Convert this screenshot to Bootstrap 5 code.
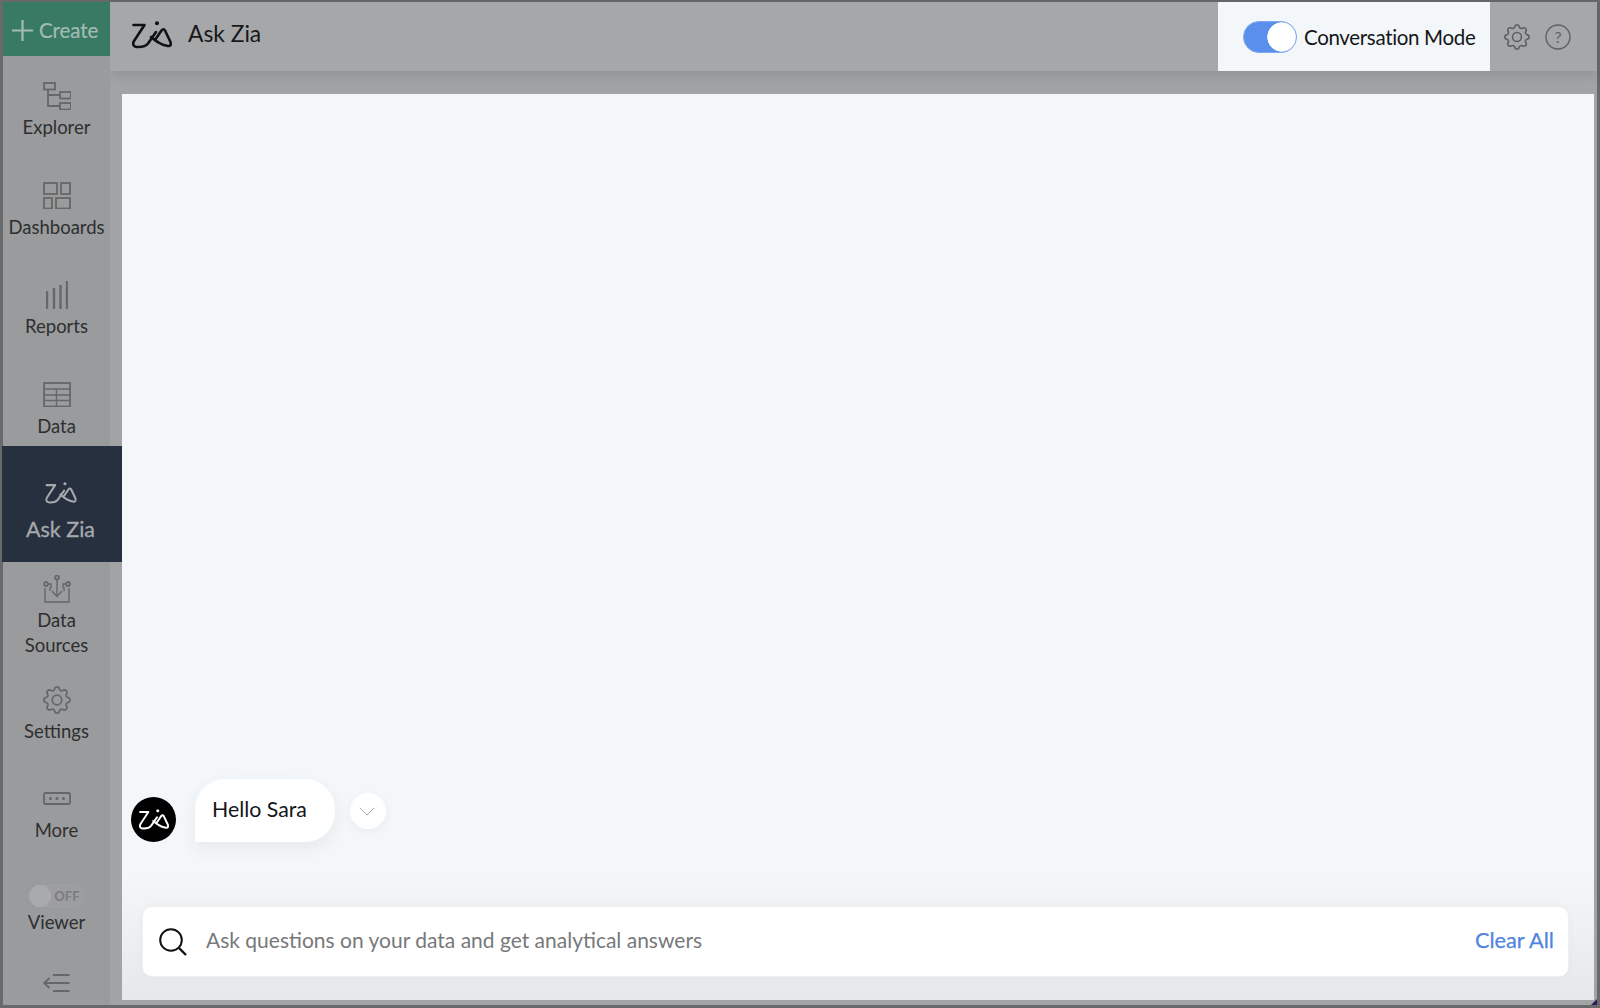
<!DOCTYPE html>
<html lang="en">
<head>
<meta charset="utf-8">
<title>Ask Zia</title>
<link href="https://cdn.jsdelivr.net/npm/bootstrap@5.3.0/dist/css/bootstrap.min.css" rel="stylesheet">
<style>
html,body{height:100%;margin:0;overflow:hidden}
body{font-family:Lato,"Liberation Sans",sans-serif;background:#6a6b6c}
.frame{width:1600px;height:1008px;padding:2px 3px 3px 3px;background:#68696a;position:relative}
.shell{height:1003px;background:#a2a3a5}
.rail{width:107px;flex:none;background:#9a9b9c;position:relative;z-index:2}
.rail-create{height:54px;width:107px;background:#397a65;color:#a3bcb3;border:0;border-radius:0;font-size:20.4px;padding:2px 0 0 9px;gap:6px;-webkit-text-stroke:.2px #a3bcb3}
.rail-create:hover{background:#397a65;color:#a3bcb3}
.rail-item{font-size:18.5px;line-height:24.5px;color:#2e2f30;text-align:center}
.rail-item svg{display:block;flex:none}
.rail-label{margin-top:5px}
.it-explorer{height:99px;padding-top:26px}
.it-dash{height:99px;padding-top:27px}
.it-dash .rail-label{margin-top:6px}
.it-reports{height:96px;padding-top:27px}
.it-data{height:96px;padding-top:32px}
.it-data .rail-label{margin-top:7px}
.it-active{height:116px;padding-top:36px;padding-right:3px;width:120px;margin-left:-1px;margin-right:-13px;background:#27303e;color:#a6a9ad;font-size:21.5px;-webkit-text-stroke:.3px #a6a9ad}
.it-active .rail-label{margin-top:13px}
.it-sources{height:106px;padding-top:13px}
.it-settings{height:102px;padding-top:18px}
.it-more{height:100px;padding-top:22px}
.it-more .rail-label{margin-top:13px}
.it-viewer{height:90px;padding-top:15px}
.it-viewer .rail-label{margin-top:3px}
.it-collapse{height:45px;padding-top:14px}
.viewer-sw{width:56px;height:22px;border-radius:11px;border:1px solid #a0a1a2;background:#9d9e9f;font-size:13px;font-weight:700;color:#7b7c7d;line-height:20px;padding-right:4px;text-align:right}
.viewer-knob{width:22px;height:22px;border-radius:50%;background:#a9aaab;margin:-1px 0 0 -1px}
.work{min-width:0}
.topbar{height:69px;background:#a6a7a9;padding-left:22px;box-shadow:0 3px 12px rgba(0,0,0,.12);position:relative;z-index:1}
.top-title{font-size:22.8px;color:#17181a;margin-left:16px;line-height:1;padding-bottom:6px}
.top-logo{margin-top:-3px}
.mode-box{width:272px;height:69px;background:#f4f7f9;padding-left:25px;color:#15161a;font-size:20.5px;flex:none}
.mode-box .form-check-input{width:54px;height:32px;margin:0;float:none;border:1px solid #7fa7f0;background-color:#5a90ec;background-image:radial-gradient(circle 15px at 38px 15px,#fff 96%,transparent 100%);background-position:0 0;background-size:auto;box-shadow:none;flex:none}
.mode-box .form-check{margin:0;padding:0;min-height:0;display:flex}
.mode-label{margin-left:7px;white-space:nowrap;letter-spacing:-.33px;padding-top:2px}
.top-tools{gap:15px;padding-left:14px;width:107px;flex:none}
.stage{padding:23px 3px 5px 12px;min-height:0}
.panel{background:linear-gradient(#f4f7f9 0,#f4f7f9 86%,#e6e7e9 100%);padding:0 25px 23px 9px;min-height:0}
.chat-row{padding-bottom:64px}
.zia-ava{width:45px;height:45px;border-radius:50%;background:#000;flex:none}
.bubble{width:140px;height:63px;background:#fff;border-radius:30px 30px 30px 0;font-size:21.3px;color:#15161a;padding:15px 0 0 17px;margin-left:19px;line-height:30px;box-shadow:0 6px 16px rgba(40,50,70,.07)}
.chev{width:36px;height:36px;border-radius:50%;background:#fff;margin:0 0 13px 15px;padding-right:3px;box-shadow:0 3px 10px rgba(40,50,70,.05)}
.ask{height:71px;margin-left:11px;background:#fff;border:1px solid #eef0f2;border-radius:10px;padding:0 14px 0 16px;box-shadow:0 0 8px rgba(40,50,70,.03)}
.ask-input{border:0;background:transparent;font-size:21px;padding:0 0 3px;margin-left:19px;box-shadow:none;color:#6f7072}
.ask-input::placeholder{color:#77787a;opacity:1}
.ask-input:focus{box-shadow:none}
.clear-btn{font-size:21.7px;color:#4f85e0;text-decoration:none;padding:0 0 3px;border:0;flex:none;-webkit-text-stroke:.25px #4f85e0}
.corner{position:absolute;background:#33165f}
.corner-l{left:3px;bottom:3px;width:9px;height:16px;clip-path:polygon(0 0,100% 100%,0 100%)}
.corner-r{right:3px;bottom:3px;width:6px;height:6px;clip-path:polygon(100% 0,100% 100%,0 100%)}
.ic{fill:none;stroke:#666768;stroke-width:1.8}
</style>
</head>
<body>
<svg width="0" height="0" class="position-absolute">
  <defs>
    <symbol id="zia" viewBox="0 0 40 28">
      <path d="M1.500 4H12.500L2 20C0 23.500 2 26 5 26C9 26 13 26.500 16 22.500L24 11" fill="none" stroke="currentColor" stroke-width="2.600" stroke-linecap="round" stroke-linejoin="round"/>
      <path d="M23 19L29.500 9.500Q31.500 7 33 9.500L38.500 21Q39.500 25.500 36 25Q30 24 26.500 21.500Q23 19.500 19 16" fill="none" stroke="currentColor" stroke-width="2.600" stroke-linecap="round" stroke-linejoin="round"/>
      <circle cx="25" cy="2.200" r="2" fill="currentColor"/>
    </symbol>
    <symbol id="gear" viewBox="0 0 16 16">
      <path fill="currentColor" d="M8 4.754a3.246 3.246 0 1 0 0 6.492 3.246 3.246 0 0 0 0-6.492zM5.754 8a2.246 2.246 0 1 1 4.492 0 2.246 2.246 0 0 1-4.492 0z"/>
      <path fill="currentColor" d="M9.796 1.343c-.527-1.79-3.065-1.79-3.592 0l-.094.319a.873.873 0 0 1-1.255.52l-.292-.16c-1.64-.892-3.433.902-2.54 2.541l.159.292a.873.873 0 0 1-.52 1.255l-.319.094c-1.79.527-1.79 3.065 0 3.592l.319.094a.873.873 0 0 1 .52 1.255l-.16.292c-.892 1.64.901 3.434 2.541 2.54l.292-.159a.873.873 0 0 1 1.255.52l.094.319c.527 1.79 3.065 1.79 3.592 0l.094-.319a.873.873 0 0 1 1.255-.52l.292.16c1.64.893 3.434-.902 2.54-2.541l-.159-.292a.873.873 0 0 1 .52-1.255l.319-.094c1.79-.527 1.79-3.065 0-3.592l-.319-.094a.873.873 0 0 1-.52-1.255l.16-.292c.893-1.64-.902-3.433-2.541-2.54l-.292.159a.873.873 0 0 1-1.255-.52l-.094-.319zm-2.633.283c.246-.835 1.428-.835 1.674 0l.094.319a1.873 1.873 0 0 0 2.693 1.115l.291-.16c.764-.415 1.6.42 1.184 1.185l-.159.292a1.873 1.873 0 0 0 1.116 2.692l.318.094c.835.246.835 1.428 0 1.674l-.319.094a1.873 1.873 0 0 0-1.115 2.693l.16.291c.415.764-.42 1.6-1.185 1.184l-.291-.159a1.873 1.873 0 0 0-2.693 1.116l-.094.318c-.246.835-1.428.835-1.674 0l-.094-.319a1.873 1.873 0 0 0-2.692-1.115l-.292.16c-.764.415-1.6-.42-1.184-1.185l.159-.291A1.873 1.873 0 0 0 1.945 8.93l-.319-.094c-.835-.246-.835-1.428 0-1.674l.319-.094A1.873 1.873 0 0 0 3.06 4.377l-.16-.292c-.415-.764.42-1.6 1.185-1.184l.292.159a1.873 1.873 0 0 0 2.692-1.115l.094-.319z"/>
    </symbol>
  </defs>
</svg>
<div class="frame">
  <div class="shell d-flex">
    <nav class="rail d-flex flex-column">
      <button class="btn rail-create d-flex align-items-center" type="button">
        <svg width="21" height="21" viewBox="0 0 21 21"><path d="M10.500 0V21M0 10.500H21" stroke="#a3bcb3" stroke-width="2.200"/></svg>
        <span>Create</span>
      </button>
      <div class="rail-item it-explorer d-flex flex-column align-items-center">
        <svg class="ic" width="28" height="28" viewBox="0 0 28 28"><rect x="1" y="1" width="11" height="6.500"/><rect x="17" y="10" width="11" height="6.500"/><rect x="17" y="21" width="11" height="6.500"/><path d="M5 7.500V24H17M5 13H17"/></svg>
        <span class="rail-label">Explorer</span>
      </div>
      <div class="rail-item it-dash d-flex flex-column align-items-center">
        <svg class="ic" width="28" height="27" viewBox="0 0 28 27"><rect x="1" y="1" width="13" height="11"/><rect x="18" y="1" width="9" height="11"/><rect x="1" y="16" width="8" height="10.500"/><rect x="13" y="16" width="14" height="10.500"/></svg>
        <span class="rail-label">Dashboards</span>
      </div>
      <div class="rail-item it-reports d-flex flex-column align-items-center">
        <svg class="ic" width="22" height="28" viewBox="0 0 22 28"><path d="M1 28V10M8 28V7M14.500 28V4M21 28V0" stroke-width="2.400"/></svg>
        <span class="rail-label">Reports</span>
      </div>
      <div class="rail-item it-data d-flex flex-column align-items-center">
        <svg class="ic" width="28" height="25" viewBox="0 0 28 25"><rect x="1" y="1" width="26" height="23.500"/><path d="M1 7H27M1 13H27M1 18.500H27M13.500 7V24.500" stroke-width="1.400"/></svg>
        <span class="rail-label">Data</span>
      </div>
      <div class="rail-item it-active d-flex flex-column align-items-center">
        <svg width="32" height="22" viewBox="0 0 40 28"><use href="#zia"/></svg>
        <span class="rail-label">Ask Zia</span>
      </div>
      <div class="rail-item it-sources d-flex flex-column align-items-center">
        <svg class="ic" width="28" height="28" viewBox="0 0 28 28"><path d="M2 13V27H26V13M7 12V16M21 12V16" stroke-width="1.400"/><circle cx="14" cy="2.500" r="2"/><circle cx="3" cy="9" r="2"/><circle cx="25" cy="9" r="2"/><path d="M14 4.500V21M9 16L14 21.500L19 16M5 9H8V13M23 9H20V13" stroke-width="1.400"/></svg>
        <span class="rail-label">Data<br>Sources</span>
      </div>
      <div class="rail-item it-settings d-flex flex-column align-items-center">
        <svg width="28" height="28" viewBox="0 0 16 16" style="color:#666768"><use href="#gear"/></svg>
        <span class="rail-label">Settings</span>
      </div>
      <div class="rail-item it-more d-flex flex-column align-items-center">
        <svg class="ic" width="28" height="13" viewBox="0 0 28 13"><rect x="1" y="1" width="26" height="11" rx="1.500"/><circle cx="7.500" cy="6.500" r="1.500" fill="#666768" stroke="none"/><circle cx="14" cy="6.500" r="1.500" fill="#666768" stroke="none"/><circle cx="20.500" cy="6.500" r="1.500" fill="#666768" stroke="none"/></svg>
        <span class="rail-label">More</span>
      </div>
      <div class="rail-item it-viewer d-flex flex-column align-items-center">
        <div class="viewer-sw d-flex justify-content-between">
          <span class="viewer-knob"></span><span>OFF</span>
        </div>
        <span class="rail-label">Viewer</span>
      </div>
      <div class="rail-item it-collapse d-flex flex-column align-items-center">
        <svg class="ic" width="27" height="18" viewBox="0 0 27 18"><path d="M10 1H26.500M1 9H26.500M10 17H26.500M6.500 4L1 9L6.500 14"/></svg>
      </div>
    </nav>
    <div class="work flex-grow-1 d-flex flex-column">
      <header class="topbar d-flex align-items-center">
        <svg class="top-logo" width="40" height="28" viewBox="0 0 40 28" style="color:#101113"><use href="#zia"/></svg>
        <span class="top-title flex-grow-1">Ask Zia</span>
        <div class="mode-box d-flex align-items-center">
          <div class="form-check form-switch"><input class="form-check-input" type="checkbox" role="switch" id="conv" checked></div>
          <label class="mode-label" for="conv">Conversation Mode</label>
        </div>
        <div class="top-tools d-flex align-items-center">
          <svg width="26" height="26" viewBox="0 0 16 16" style="color:#5f6061"><use href="#gear"/></svg>
          <svg width="26" height="26" viewBox="0 0 26 26"><circle cx="13" cy="13" r="12" fill="none" stroke="#5f6061" stroke-width="1.400"/><text x="13" y="18.500" text-anchor="middle" font-family="Lato,sans-serif" font-size="16" fill="#5f6061">?</text></svg>
        </div>
      </header>
      <main class="stage flex-grow-1 d-flex flex-column">
        <div class="panel flex-grow-1 d-flex flex-column justify-content-end">
          <div class="chat-row d-flex align-items-end">
            <div class="zia-ava d-flex align-items-center justify-content-center text-white">
              <svg width="30" height="21" viewBox="0 0 40 28"><use href="#zia"/></svg>
            </div>
            <div class="bubble">Hello Sara</div>
            <div class="chev d-flex align-items-center justify-content-center">
              <svg width="16" height="9" viewBox="0 0 16 9"><path d="M1 1L8 8L15 1" fill="none" stroke="#a8a9ab" stroke-width="1"/></svg>
            </div>
          </div>
          <div class="ask d-flex align-items-center">
            <svg width="28" height="28" viewBox="0 0 28 28" class="flex-shrink-0"><circle cx="12" cy="12" r="10.800" fill="none" stroke="#111" stroke-width="2"/><path d="M20 20L27 27" stroke="#111" stroke-width="2.400"/></svg>
            <input class="form-control ask-input flex-grow-1" type="text" placeholder="Ask questions on your data and get analytical answers">
            <button class="btn btn-link clear-btn" type="button">Clear All</button>
          </div>
        </div>
      </main>
    </div>
  </div>
  <span class="corner corner-l"></span>
  <span class="corner corner-r"></span>
</div>
<script src="https://cdn.jsdelivr.net/npm/bootstrap@5.3.0/dist/js/bootstrap.bundle.min.js"></script>
</body>
</html>
